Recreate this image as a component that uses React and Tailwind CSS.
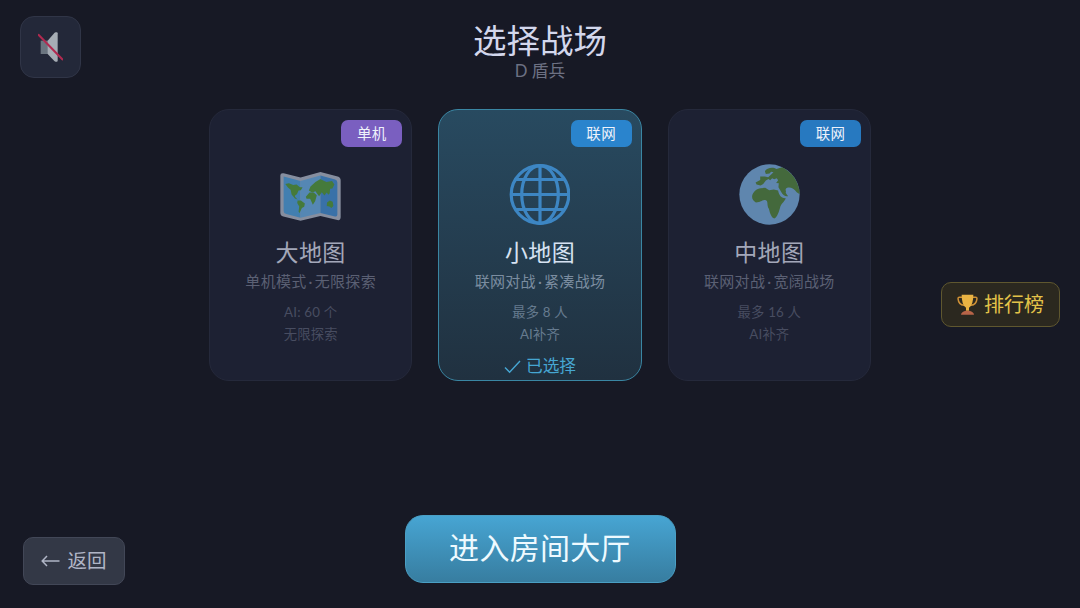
import { useState } from "react";
import clsx from "clsx";

const MAPS = [
  {
    id: "large",
    name: "大地图",
    mode: "单机模式",
    trait: "无限探索",
    info: ["AI: 60 个", "无限探索"],
    badge: "单机",
    badgeClass: "bg-[#7a5fc0]",
    Icon: WorldMapIcon,
  },
  {
    id: "small",
    name: "小地图",
    mode: "联网对战",
    trait: "紧凑战场",
    info: ["最多 8 人", "AI补齐"],
    badge: "联网",
    badgeClass: "bg-[#2a84cd]",
    Icon: GlobeIcon,
  },
  {
    id: "medium",
    name: "中地图",
    mode: "联网对战",
    trait: "宽阔战场",
    info: ["最多 16 人", "AI补齐"],
    badge: "联网",
    badgeClass: "bg-[#2779c0]",
    Icon: EarthIcon,
  },
];

function MutedIcon() {
  return (
    <svg viewBox="0 0 75 90" className="h-[30px] w-[25px]">
      <path d="M8 26h22v40H8z" fill="#6b7580" />
      <path d="M29 26 49 3q2-2 4-2h3q3 0 3 3v82q0 3-3 3h-3q-2 0-4-2L29 66z" fill="#a6adb5" />
      <path d="M2 9 73 82" stroke="#b12a50" strokeWidth="6.5" strokeLinecap="round" />
    </svg>
  );
}

function WorldMapIcon() {
  return (
    <svg viewBox="0 0 182 184" className="h-[61px] w-[61px]">
      <path
        d="M10 28 61 41 121 24 173 38Q182 41 182 50V160Q182 171 172 169L121 157 61 171 9 158Q0 156 0 147V35Q0 26 10 28Z"
        fill="#868e9f"
      />
      <path d="M10 38 61 51V162L18 151Q10 149 10 142Z" fill="#427fb0" />
      <path d="M61 51 121 35V148L61 162Z" fill="#5587b4" />
      <path d="M121 35 165 47Q172 49 172 56V152Q172 160 165 158L121 148Z" fill="#3971a8" />
      <g fill="#457a3b">
        <path d="M15 60 26 58 39 63 49 62 59 70 67 70 62 79 55 80 50 91 45 94 44 99 52 107 44 104 34 92 31 78 23 71Z" />
        <path d="M52 110 62 110 74 119 72 129 65 133 58 148 55 144 57 128 51 118Z" />
        <path d="M77 99 88 86 101 86 110 94 105 112 98 123 90 105 79 105Z" />
        <path d="M86 80 91 68 106 54 121 45 123 47 139 54 156 51 163 62 157 74 150 75 149 88 145 93 140 86 133 95 125 85 117 97 110 88 106 82 96 86Z" />
        <path d="M141 116 149 110 158 114 160 127 154 133 148 128 140 127Z" />
      </g>
    </svg>
  );
}

function GlobeIcon() {
  return (
    <svg viewBox="0 0 61 61" className="h-[61px] w-[61px]" fill="none" stroke="#3d86c3" strokeWidth="3.2">
      <circle cx="31" cy="30.5" r="28.8" />
      <ellipse cx="31" cy="30.5" rx="18.3" ry="28.8" />
      <path d="M31 2v57M2.5 30.5h57M6.5 15.5h49M6.5 45.5h49" />
    </svg>
  );
}

function EarthIcon() {
  return (
    <svg viewBox="0 0 182 184" className="h-[61px] w-[61px]">
      <circle cx="91" cy="92" r="91" fill="#5f86ae" />
      <g fill="#44693c">
        <path d="M77 22C82 12 101 8 112 15L129 10C158 24 181 54 182 91L173 85C167 76 158 71 150 71 142 69 137 76 141 82 137 88 145 92 147 97 138 99 131 93 125 82L118 70 119 58 111 57 117 49 113 43 105 46 99 43 93 49 88 45 80 50 72 60 64 65 52 62 49 56 63 48 63 38 77 38 87 40 96 32 103 25 96 23 91 29 80 30Z" />
        <path d="M65 73 78 72 90 79 104 77 117 80C119 92 125 104 140 103 137 113 125 120 123 131 118 151 110 165 104 164 95 160 92 145 89 135 82 123 88 113 80 109 69 106 67 116 50 116 40 110 36 101 40 91 46 81 51 75 65 73Z" />
      </g>
    </svg>
  );
}

function TrophyIcon() {
  return (
    <svg viewBox="0 0 63 63" className="h-[21px] w-[21px]">
      <path d="M16 10H7q-4 0-4 4 2 19 18 20M47 10h9q4 0 4 4-2 19-18 20" fill="none" stroke="#cf9136" strokeWidth="4.5" />
      <path d="M14 2h35q0 31-13 39v9h-9v-9Q14 33 14 2Z" fill="#e9b343" />
      <path d="M12 62q0-8 14-12h11q14 4 14 12Z" fill="#b86448" />
    </svg>
  );
}

function CheckIcon() {
  return (
    <svg viewBox="0 0 17 15" className="h-[15px] w-[17px]" fill="none" stroke="currentColor" strokeWidth="1.4">
      <path d="m1 8.5 4.6 4.7L16 2" />
    </svg>
  );
}

function ArrowIcon() {
  return (
    <svg viewBox="0 0 19 12" className="h-3 w-[19px]" fill="none" stroke="currentColor" strokeWidth="1.5">
      <path d="M18.5 6H1.2M6 1 1.2 6 6 11" />
    </svg>
  );
}

function MapCard({ map, selected, onSelect }) {
  const { Icon } = map;

  return (
    <button
      onClick={onSelect}
      className={clsx(
        "flex h-[272px] flex-1 flex-col items-center rounded-[20px] border px-[9px] pt-[10px]",
        selected
          ? "border-[#3a86a3] bg-linear-to-b from-[#284a60] to-[#203140]"
          : "border-[#25293b] bg-[#1d2133]"
      )}
    >
      <span
        className={clsx(
          "flex h-[27px] w-[61px] items-center justify-center self-end rounded-[7px] text-[14.5px] tracking-[0.3px] text-[#eef2fb]",
          map.badgeClass
        )}
      >
        {map.badge}
      </span>
      <div className="mt-[17px]">
        <Icon />
      </div>
      <span
        className={clsx(
          "mt-[13px] text-[23px] leading-7 tracking-[0.4px]",
          selected ? "text-[#d6e2f2]" : "text-[#a3a7b9]"
        )}
      >
        {map.name}
      </span>
      <span
        className={clsx(
          "mt-[5px] text-[15px] leading-5 tracking-[0.3px]",
          selected ? "text-[#7b8da0]" : "text-[#5b6074]"
        )}
      >
        {map.mode}
        <span className="px-[2px]">·</span>
        {map.trait}
      </span>
      <div
        className={clsx(
          "mt-[11px] text-[13.3px] leading-[21.5px] tracking-[0.2px]",
          selected ? "text-[#667b8f]" : "text-[#484d61]"
        )}
      >
        {map.info.map((line) => (
          <p key={line}>{line}</p>
        ))}
      </div>
      {selected && (
        <span className="mt-[11px] flex items-center gap-[5px] text-[16.7px] leading-5 text-[#46a6d2]">
          <CheckIcon />
          已选择
        </span>
      )}
    </button>
  );
}

export default function App() {
  const [selectedId, setSelectedId] = useState("small");

  return (
    <div className="grid h-screen grid-cols-[209px_662px_209px] overflow-hidden bg-[#171925] font-[Lato,'Noto_Sans_CJK_SC',sans-serif]">
      {/* Sound and back */}
      <div className="flex flex-col items-start justify-between pt-4 pb-[23px] pl-5">
        <button className="flex h-[62px] w-[61px] items-center justify-center rounded-[14px] border border-[#303547] bg-[#232839]">
          <MutedIcon />
        </button>
        <button className="ml-[3px] flex h-12 w-[102px] items-center justify-center gap-[7px] rounded-[10px] border border-[#424757] bg-[#333846] text-[19.5px] text-[#b0b5c6]">
          <ArrowIcon />
          返回
        </button>
      </div>

      {/* Map selection */}
      <main className="flex flex-col items-center pt-[22px] pb-[25px]">
        <h1 className="text-[33.5px] leading-9 text-[#d3d7ec]">选择战场</h1>
        <p className="mt-1 text-[16.7px] leading-[18px] text-[#6d7183]">D 盾兵</p>

        <div className="mt-[29px] flex w-full gap-[26px]">
          {MAPS.map((map) => (
            <MapCard
              key={map.id}
              map={map}
              selected={map.id === selectedId}
              onSelect={() => setSelectedId(map.id)}
            />
          ))}
        </div>

        <button className="mt-auto flex h-[68px] w-[271px] items-center justify-center rounded-[18px] border border-[#4a9fc4] bg-linear-to-b from-[#47a5d3] to-[#377da0] pb-[3px] text-[30px] tracking-[0.3px] text-[#eefaff]">
          进入房间大厅
        </button>
      </main>

      {/* Leaderboard */}
      <div className="flex items-center justify-end pr-5">
        <button className="flex h-[45px] w-[119px] items-center justify-center gap-[6px] rounded-[10px] border border-[#5f572f] bg-[#2b281f] text-[20px] text-[#e3c349]">
          <TrophyIcon />
          排行榜
        </button>
      </div>
    </div>
  );
}
